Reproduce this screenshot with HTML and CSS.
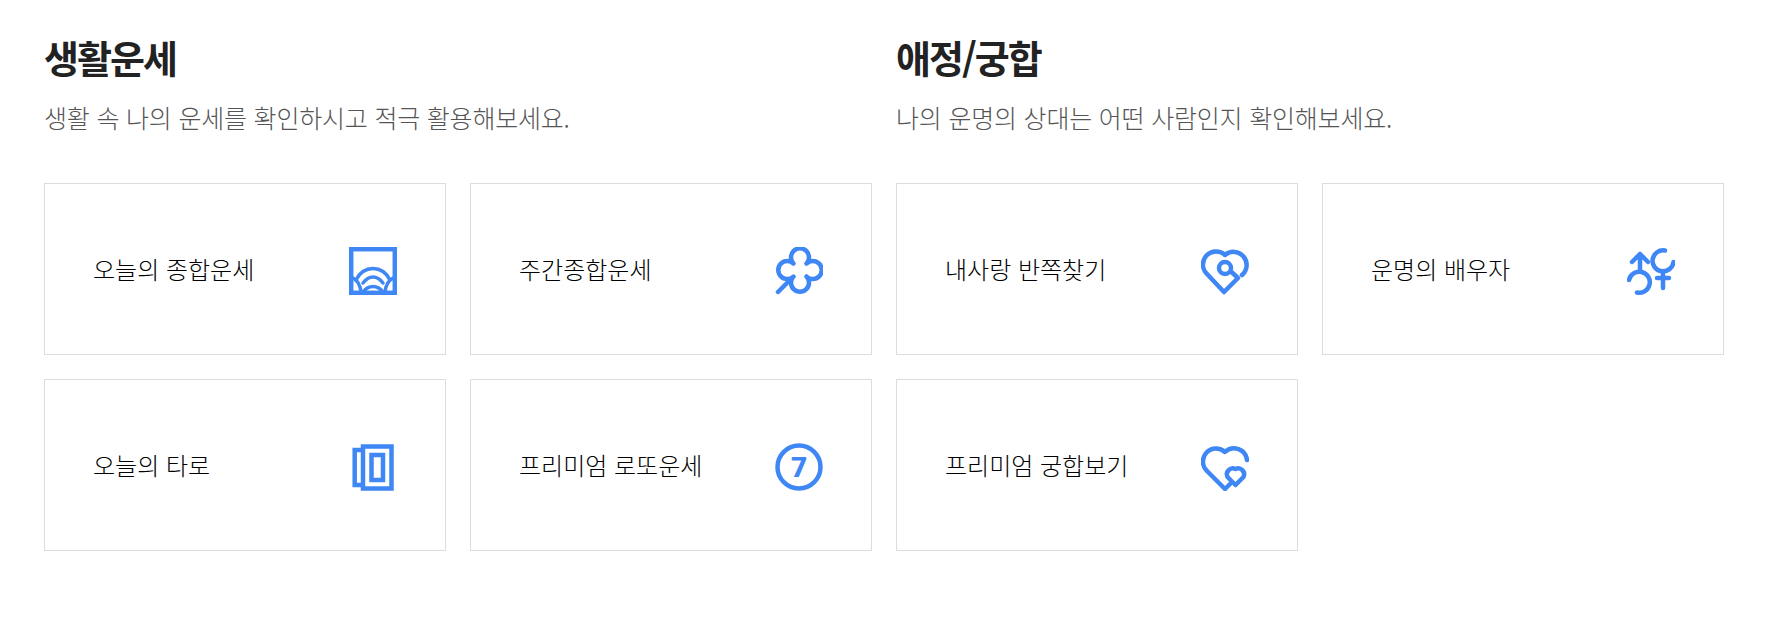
FILE: index.html
```html
<!DOCTYPE html>
<html lang="ko">
<head>
    <meta charset="UTF-8">
    <meta name="viewport" content="width=device-width, initial-scale=1.0">
    <title>운세</title>
    <link rel="stylesheet" href="styles.css">
</head>
<body>
    <div class="container">
        <div class="section">
            <h2>생활운세</h2>
            <p class="description">생활 속 나의 운세를 확인하시고 적극 활용해보세요.</p>
            <div class="cards">
                <a class="card" href="#">
                    <span>오늘의 종합운세</span>
                    <svg class="icon" viewBox="0 0 48 48">
                        <rect x="2.200" y="2.200" width="43.600" height="43.600"/>
                        <path class="thin" d="M7 33C11 25 17 21.500 24 21.500S37 25 41 33"/>
                        <path class="thin" d="M14 36C17 32 20 30 24 30S31 32 34 36"/>
                        <path class="thin" d="M4 31C8 33 11 37 12 45M44 31C40 33 37 37 36 45"/>
                        <path class="thin" d="M14 45C17 41 20 39.500 24 39.500S31 41 34 45"/>
                    </svg>
                </a>
                <a class="card" href="#">
                    <span>주간종합운세</span>
                    <svg class="icon" viewBox="0 0 48 48">
                        <path d="M18.500 16.500A9 9 0 1 1 31.500 16.500A9 9 0 1 1 31.500 29.500A9 9 0 1 1 18.500 29.500A9 9 0 1 1 18.500 16.500Z"/>
                        <path d="M16 32L3 45"/>
                    </svg>
                </a>
                <a class="card" href="#">
                    <span>오늘의 타로</span>
                    <svg class="icon" viewBox="0 0 48 48">
                        <rect class="square" x="14" y="3.500" width="28.500" height="42"/>
                        <rect class="square" x="22.500" y="12" width="11.500" height="25"/>
                        <path class="square" d="M14 7H5.700V42H14"/>
                    </svg>
                </a>
                <a class="card" href="#">
                    <span>프리미엄 로또운세</span>
                    <svg class="icon" viewBox="0 0 48 48">
                        <circle cx="24" cy="24" r="21.500"/>
                        <text x="24" y="33.500" text-anchor="middle">7</text>
                    </svg>
                </a>
            </div>
        </div>
        <div class="section">
            <h2>애정/궁합</h2>
            <p class="description">나의 운명의 상대는 어떤 사람인지 확인해보세요.</p>
            <div class="cards">
                <a class="card" href="#">
                    <span>내사랑 반쪽찾기</span>
                    <svg class="icon" viewBox="0 0 48 48">
                        <path d="M41 28A13 13 0 0 0 24 8A13 13 0 0 0 6 27L23 45L37 31L30.500 25"/>
                        <circle cx="24" cy="21" r="6"/>
                    </svg>
                </a>
                <a class="card" href="#">
                    <span>운명의 배우자</span>
                    <svg class="icon" viewBox="0 0 48 48">
                        <path d="M46.500 15A10.500 10.500 0 1 1 38 3.500"/>
                        <path d="M36 24V41M30 31H42"/>
                        <path d="M5 15L13 7L21 15M13 7V24"/>
                        <path d="M10 45.500A10.500 10.500 0 1 0 2 33"/>
                    </svg>
                </a>
                <a class="card" href="#">
                    <span>프리미엄 궁합보기</span>
                    <svg class="icon" viewBox="0 0 48 48">
                        <path d="M46 17A13 13 0 0 0 24 9A13 13 0 0 0 6 28L24 46L29 41"/>
                        <path d="M34.500 42L26.500 34A6 6 0 0 1 34.500 26A6 6 0 0 1 42.500 34Z"/>
                    </svg>
                </a>
            </div>
        </div>
    </div>
</body>
</html>
```
FILE: styles.css
```css
body {
    font-family: "Noto Sans CJK KR", "Noto Sans", sans-serif;
    margin: 0;
    padding: 0;
    background-color: #fff;
    color: #222;
}
.container {
    display: grid;
    grid-template-columns: 828px 828px;
    column-gap: 24px;
    padding: 32px 49px 0 44px;
}
h2 {
    margin: 0;
    font-size: 38px;
    line-height: 50px;
    font-weight: 700;
    letter-spacing: -2px;
    color: #222;
}
.description {
    margin: 17px 0 0;
    font-size: 25px;
    line-height: 36px;
    font-weight: 300;
    letter-spacing: -0.2px;
    color: #555;
}
.cards {
    display: grid;
    grid-template-columns: 402px 402px;
    grid-auto-rows: 172px;
    gap: 24px;
    margin-top: 48px;
}
.card {
    display: flex;
    justify-content: space-between;
    align-items: center;
    padding: 0 48px;
    border: 1px solid #ddd;
    color: #000;
    font-size: 24px;
    font-weight: 300;
    text-decoration: none;
}
.card span {
    margin-bottom: 2px;
}
.icon {
    width: 48px;
    height: 48px;
    margin-top: 3px;
    fill: none;
    stroke: #3f87f5;
    stroke-width: 4.500;
    stroke-linecap: round;
    stroke-linejoin: round;
}
.icon .thin {
    stroke-width: 3.500;
}
.icon .square {
    stroke-linecap: butt;
    stroke-linejoin: miter;
}
.icon rect:first-child {
    stroke-linejoin: miter;
}
.icon text {
    fill: #3f87f5;
    stroke: none;
    font-family: "Roboto", sans-serif;
    font-weight: 900;
    font-size: 28px;
}
```
